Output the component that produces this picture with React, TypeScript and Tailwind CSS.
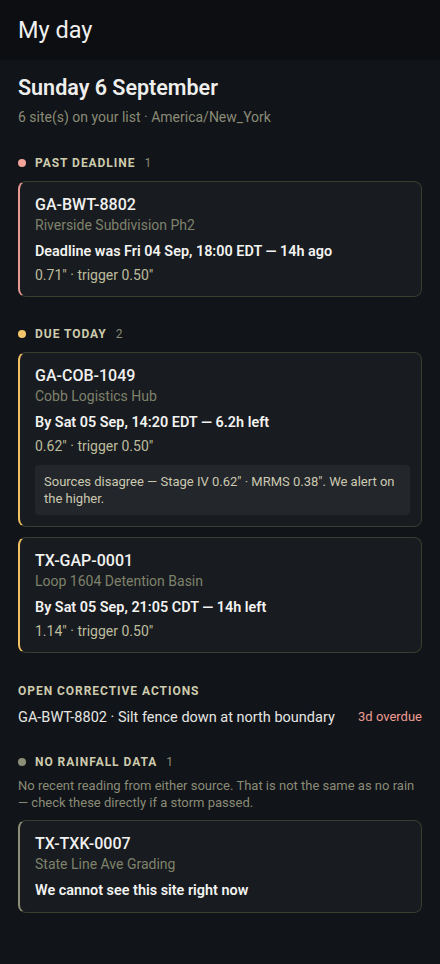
import React from 'react'

interface Site {
    id: string;
    name: string;
    headline: string;
    reading?: string;
    note?: string;
}

const pastDeadline: Site[] = [
    { id: 'GA-BWT-8802', name: 'Riverside Subdivision Ph2', headline: 'Deadline was Fri 04 Sep, 18:00 EDT — 14h ago', reading: '0.71" · trigger 0.50"' },
]

const dueToday: Site[] = [
    { id: 'GA-COB-1049', name: 'Cobb Logistics Hub', headline: 'By Sat 05 Sep, 14:20 EDT — 6.2h left', reading: '0.62" · trigger 0.50"', note: 'Sources disagree — Stage IV 0.62" · MRMS 0.38". We alert on the higher.' },
    { id: 'TX-GAP-0001', name: 'Loop 1604 Detention Basin', headline: 'By Sat 05 Sep, 21:05 CDT — 14h left', reading: '1.14" · trigger 0.50"' },
]

const noData: Site[] = [
    { id: 'TX-TXK-0007', name: 'State Line Ave Grading', headline: 'We cannot see this site right now' },
]

function SectionLabel({ dot, label, count }: { dot: string, label: string, count: number }) {
    return (
        <div className="flex items-center h-4">
            <span className={`w-2 h-2 rounded-full mr-[9px] ${dot}`} />
            <span className="text-[12px] font-bold uppercase tracking-[0.08em] text-[#cdcbae]">{label}</span>
            <span className="text-[12px] text-[#8a8b77] ml-[9px]">{count}</span>
        </div>
    )
}

function SiteCard({ site, accent }: { site: Site, accent: string }) {
    return (
        <div className={`bg-[#181b20] border border-[#3a3d2f] border-l-2 rounded-lg pl-[15px] pr-[11px] pt-[12px] pb-[11px] ${accent}`}>
            <p className="text-[16px] leading-[22px] font-medium text-[#f1f1ef]">{site.id}</p>
            <p className="text-[14px] leading-[18px] text-[#7f826b]">{site.name}</p>
            <p className="text-[14.4px] leading-[20px] font-semibold text-[#f3f3f1] mt-[8px]">{site.headline}</p>
            {site.reading && (
                <p className="text-[14px] leading-[20px] text-[#bdbc9d] mt-[3px]">{site.reading}</p>
            )}
            {site.note && (
                <div className="bg-[#23262b] rounded mt-[9px] px-[9px] py-[8px] text-[13px] leading-[17px] text-[#cbc9b1]">
                    {site.note}
                </div>
            )}
        </div>
    )
}

export default function App() {
    return (
        <div className="min-h-[964px] bg-[#111418] font-['Roboto',sans-serif]">
            <div className="h-[60px] bg-[#0c0e11] flex items-center px-[18px] pt-[2px]">
                <h1 className="text-[23.5px] text-[#f0f0ee] font-normal">My day</h1>
            </div>

            <div className="px-[18px] pt-[14px] pb-10">
                <h2 className="text-[21.5px] leading-[28px] font-semibold text-[#eeeeec]">Sunday 6 September</h2>
                <p className="text-[14px] leading-[18px] text-[#8a8b77] mt-[6px]">6 site(s) on your list · America/New_York</p>

                {/* Past deadline */}
                <div className="mt-[29px]">
                    <SectionLabel dot="bg-[#f4a39b]" label="Past deadline" count={pastDeadline.length} />
                    <div className="flex flex-col gap-[10px] mt-[10px]">
                        {pastDeadline.map(s => <SiteCard key={s.id} site={s} accent="border-l-[#e89a92]" />)}
                    </div>
                </div>

                {/* Due today */}
                <div className="mt-[29px]">
                    <SectionLabel dot="bg-[#f6c56b]" label="Due today" count={dueToday.length} />
                    <div className="flex flex-col gap-[10px] mt-[10px]">
                        {dueToday.map(s => <SiteCard key={s.id} site={s} accent="border-l-[#f0c063]" />)}
                    </div>
                </div>

                {/* Corrective actions */}
                <div className="mt-[30px]">
                    <p className="text-[12px] leading-4 font-bold uppercase tracking-[0.08em] text-[#cdcbae]">Open corrective actions</p>
                    <div className="flex items-start justify-between mt-[9px]">
                        <span className="text-[14.5px] leading-[20px] text-[#e6e6e3]">GA-BWT-8802 · Silt fence down at north boundary</span>
                        <span className="text-[13px] leading-[18px] text-[#ee9c93]">3d overdue</span>
                    </div>
                </div>

                {/* No rainfall data */}
                <div className="mt-[26px]">
                    <SectionLabel dot="bg-[#8e8f78]" label="No rainfall data" count={noData.length} />
                    <p className="text-[13px] leading-[17px] text-[#8a8b77] mt-[7px]">
                        No recent reading from either source. That is not the same as no rain — check these directly if a storm passed.
                    </p>
                    <div className="flex flex-col gap-[10px] mt-[9px]">
                        {noData.map(s => <SiteCard key={s.id} site={s} accent="border-l-[#8e8f78]" />)}
                    </div>
                </div>
            </div>
        </div>
    )
}
